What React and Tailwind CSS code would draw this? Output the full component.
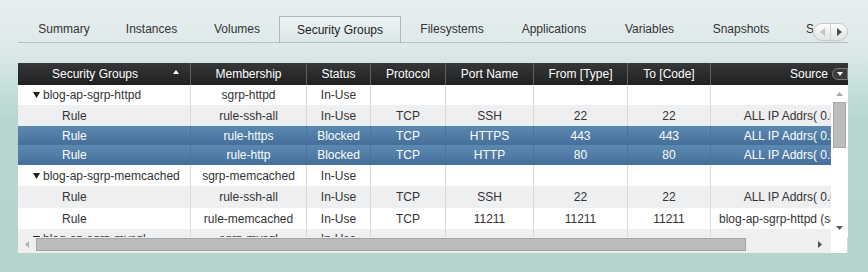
import React from 'react';

const colW = ['w-[173px]', 'w-[116px]', 'w-[64px]', 'w-[75px]', 'w-[88px]', 'w-[94px]', 'w-[83px]', 'w-[196px]'];

const headers = ['Security Groups', 'Membership', 'Status', 'Protocol', 'Port Name', 'From [Type]', 'To [Code]', 'Source'];

const tabs = [
  { label: 'Summary', w: 'w-[88px] text-center' },
  { label: 'Instances', w: 'w-[87px] text-center' },
  { label: 'Volumes', w: 'w-[84px] text-center' },
  { label: 'Security Groups', w: 'w-[122px] text-center', active: true },
  { label: 'Filesystems', w: 'w-[102px] text-center' },
  { label: 'Applications', w: 'w-[102px] text-center' },
  { label: 'Variables', w: 'w-[89px] text-center' },
  { label: 'Snapshots', w: 'w-[94px] text-center' },
  { label: 'Storage', w: 'w-[90px] pl-[18px]' },
];

const ALL_IP = 'ALL IP Addrs( 0.0.0.0/0 )';

const rows = [
  { group: true, h: 'h-[20px]', tone: 'white', cells: ['blog-ap-sgrp-httpd', 'sgrp-httpd', 'In-Use', '', '', '', '', ''] },
  { h: 'h-[21px]', tone: 'gray', cells: ['Rule', 'rule-ssh-all', 'In-Use', 'TCP', 'SSH', '22', '22', ALL_IP] },
  { h: 'h-[19px]', tone: 'sel', cells: ['Rule', 'rule-https', 'Blocked', 'TCP', 'HTTPS', '443', '443', ALL_IP] },
  { h: 'h-[20px]', tone: 'sel', cells: ['Rule', 'rule-http', 'Blocked', 'TCP', 'HTTP', '80', '80', ALL_IP] },
  { group: true, h: 'h-[21px]', tone: 'white', cells: ['blog-ap-sgrp-memcached', 'sgrp-memcached', 'In-Use', '', '', '', '', ''] },
  { h: 'h-[22px]', tone: 'gray', cells: ['Rule', 'rule-ssh-all', 'In-Use', 'TCP', 'SSH', '22', '22', ALL_IP] },
  { h: 'h-[21px]', tone: 'white', cells: ['Rule', 'rule-memcached', 'In-Use', 'TCP', '11211', '11211', '11211', 'blog-ap-sgrp-httpd (sgrp-httpd-sg)'] },
  { group: true, h: 'h-[20px]', tone: 'gray', cells: ['blog-ap-sgrp-mysql', 'sgrp-mysql', 'In-Use', '', '', '', '', ''] },
];

const toneClass = {
  white: 'bg-white text-[#333]',
  gray: 'bg-[#eeeff0] text-[#333]',
  sel: 'bg-gradient-to-b from-[#5b8ab1] to-[#466f9b] text-white',
};

const Tri = ({ dir = 'down', color = '#222', w = 8, h = 6 }) => {
  const pts = {
    down: `0,0 ${w},0 ${w / 2},${h}`,
    up: `0,${h} ${w},${h} ${w / 2},0`,
    left: `${w},0 ${w},${h} 0,${h / 2}`,
    right: `0,0 0,${h} ${w},${h / 2}`,
  }[dir];
  return (
    <svg width={w} height={h} viewBox={`0 0 ${w} ${h}`} className="shrink-0">
      <polygon points={pts} fill={color} />
    </svg>
  );
};

const Row = ({ row }) => {
  const sel = row.tone === 'sel';
  const line = sel ? 'border-[#4b739b]' : 'border-[#d9d9d9]';
  return (
    <div className={`flex ${row.h} ${toneClass[row.tone]}`}>
      {row.cells.map((c, i) => {
        if (i === 0) {
          return row.group ? (
            <div key={i} className={`${colW[i]} shrink-0 border-r ${line} flex items-center gap-[3px] pl-[15px] whitespace-nowrap overflow-hidden`}>
              <Tri w={7} h={6} color="#222" />
              <span>{c}</span>
            </div>
          ) : (
            <div key={i} className={`${colW[i]} shrink-0 border-r ${line} flex items-center pl-[44px] whitespace-nowrap overflow-hidden`}>
              {c}
            </div>
          );
        }
        return (
          <div
            key={i}
            className={`${colW[i]} shrink-0 ${i < 7 ? `border-r ${line}` : ''} flex items-center justify-center whitespace-nowrap overflow-hidden`}
          >
            {c}
          </div>
        );
      })}
    </div>
  );
};

export default function App() {
  return (
    <div className="w-[868px] h-[272px] overflow-hidden bg-[linear-gradient(180deg,#e8eef0_0%,#dde9e9_18%,#c6dfda_32%,#b7d6d0_45%,#b4d4cd_100%)] font-['Liberation_Sans',Arial,sans-serif] text-[12px] pt-[16px] pl-[18px]">
      {/* tab strip */}
      <div className="w-[830px] h-[27px] flex border-b border-[#b9bdbd]">
        <div className="w-[795px] flex overflow-hidden pl-[2px]">
          {tabs.map((t) => (
            <div
              key={t.label}
              className={
                t.active
                  ? `${t.w} shrink-0 h-[27px] -mb-px leading-[26px] text-[#222] border-l border-t border-r border-[#b3b7b7] bg-gradient-to-b from-[#eef3f4] to-[#dae6e6] whitespace-nowrap`
                  : `${t.w} shrink-0 h-[26px] leading-[26px] text-[#333] whitespace-nowrap`
              }
            >
              {t.label}
            </div>
          ))}
        </div>
        <div className="self-end mb-[1px] w-[35px] h-[18px] rounded-full border border-[#c5c9c9] bg-gradient-to-b from-[#fbfbfb] to-[#e1e4e4] flex overflow-hidden">
          <div className="flex-1 flex items-center justify-center border-r border-[#cfd2d2]">
            <Tri dir="left" w={5} h={8} color="#c4c6c6" />
          </div>
          <div className="flex-1 flex items-center justify-center">
            <Tri dir="right" w={5} h={8} color="#4a4a4a" />
          </div>
        </div>
      </div>

      {/* grid panel */}
      <div className="mt-[20px] w-[830px] bg-[#f0f0f0]">
        <div className="relative h-[22px] flex overflow-hidden bg-gradient-to-b from-[#363738] to-[#1f2021] text-white">
          {headers.map((h, i) => (
            <div
              key={h}
              className={`${colW[i]} shrink-0 relative flex items-center justify-center whitespace-nowrap ${i < 7 ? 'border-r border-[#5c5e60]' : ''} ${i === 0 ? 'pr-[18px]' : ''}`}
            >
              {h}
              {i === 0 && (
                <span className="absolute right-[11px] top-[7px]">
                  <Tri dir="up" w={6} h={4} color="#ffffff" />
                </span>
              )}
            </div>
          ))}
          <div className="absolute right-0 top-[5px] w-[16px] h-[12px] rounded-l-full bg-[#3a3b3c] border border-[#7a7c7e] flex items-center justify-center">
            <Tri w={6} h={4} color="#ffffff" />
          </div>
        </div>

        <div className="flex h-[152px]">
          <div className="w-[813px] h-[152px] overflow-hidden">
            <div className="w-[889px]">
              {rows.map((r, i) => (
                <Row key={i} row={r} />
              ))}
            </div>
          </div>
          <div className="w-[17px] h-[152px] bg-white flex flex-col items-center">
            <div className="h-[17px] flex items-center justify-center">
              <Tri dir="up" w={7} h={4} color="#a9abab" />
            </div>
            <div className="w-[13px] h-[46px] bg-[#bdbdbd] border border-[#a7a7a7]" />
            <div className="flex-1" />
            <div className="h-[12px] flex items-start justify-center pt-[1px]">
              <Tri w={7} h={4} color="#5a5a5a" />
            </div>
          </div>
        </div>

        <div className="flex h-[16px]">
          <div className="w-[813px] bg-[#efefef] flex items-start">
            <div className="w-[18px] h-[14px] flex items-center justify-center">
              <Tri dir="left" w={4} h={7} color="#b3b3b3" />
            </div>
            <div className="w-[710px] h-[13px] mt-px bg-[#bcbcbc] border border-[#a3a3a3]" />
            <div className="flex-1" />
            <div className="w-[17px] h-[14px] flex items-center justify-center mr-[3px]">
              <Tri dir="right" w={4} h={7} color="#505050" />
            </div>
          </div>
          <div className="w-[17px] bg-white border-r border-[#d6dada]" />
        </div>
      </div>
    </div>
  );
}
